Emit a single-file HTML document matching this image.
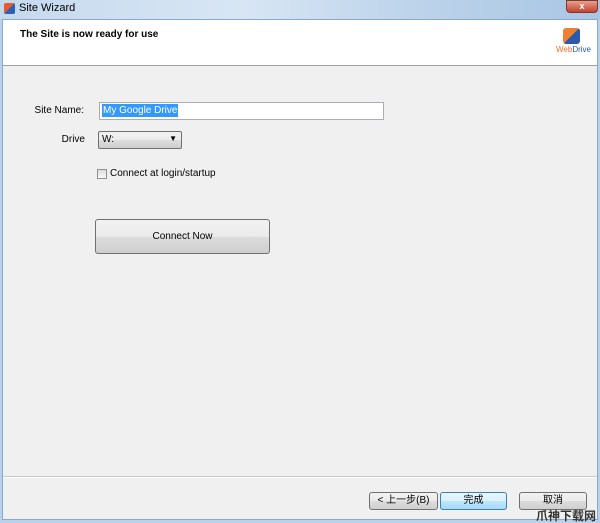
<!DOCTYPE html>
<html><head><style>
html,body{margin:0;width:600px;height:523px;overflow:hidden}
body{font-family:"Liberation Sans","Noto Sans CJK SC",sans-serif;font-size:10px;color:#000;position:relative;background:#b9d1ea}
.a{position:absolute;box-sizing:border-box;white-space:nowrap}
.btn{background:linear-gradient(#f2f2f2 0%,#ebebeb 50%,#dddddd 51%,#cfcfcf 100%);border:1px solid #707070;border-radius:3px;text-align:center}
</style></head><body>
<div class="a" style="left:0;top:0;width:600px;height:19px;background:linear-gradient(90deg,#c5d9ee,#d8e6f4 40%,#bcd3ea 70%,#a9c6e4)"></div>
<div class="a" style="left:4px;top:3px;width:11px;height:11px;background:linear-gradient(135deg,#e85a2a 50%,#2a62b8 50%);border-radius:2px"></div>
<div class="a" style="left:19px;top:2px;font-size:11px">Site Wizard</div>
<div class="a" style="left:566px;top:0;width:32px;height:13px;background:linear-gradient(#e8a090,#c4432d);border:1px solid #7a3a30;border-radius:0 0 4px 4px;color:#fff;font-weight:bold;text-align:center;font-size:9px;line-height:11px">x</div>
<div class="a" style="left:2px;top:19px;width:596px;height:501px;background:#f0f0f0;border:1px solid #8aa8c8"></div>
<div class="a" style="left:3px;top:20px;width:594px;height:46px;background:#fff;border-bottom:1px solid #a0a0a0"></div>
<div class="a" style="left:20px;top:29px;font-weight:bold;font-size:10px">The Site is now ready for use</div>
<div class="a" style="left:563px;top:28px;width:17px;height:16px;border-radius:3px;background:linear-gradient(135deg,#f08030 50%,#2a5aa8 50%)"></div>
<div class="a" style="left:556px;top:45px;font-size:8px;color:#2a5aa8"><span style="color:#e87030">Web</span>Drive</div>
<div class="a" style="left:20px;top:105px;width:64px;text-align:right">Site Name:</div>
<div class="a" style="left:99px;top:102px;width:285px;height:18px;background:#fff;border:1px solid #abadb3"></div>
<div class="a" style="left:102px;top:104px;background:#3399ff;color:#fff;padding:0 1px;line-height:13px">My Google Drive</div>
<div class="a" style="left:40px;top:134px;width:45px;text-align:right">Drive</div>
<div class="a btn" style="left:98px;top:131px;width:84px;height:18px;text-align:left;padding:2px 3px;border-radius:2px">W:<span style="position:absolute;right:4px;top:2px;font-size:8px">▼</span></div>
<div class="a" style="left:97px;top:169px;width:10px;height:10px;border:1px solid #8f8f8f;background:linear-gradient(#dcdcdc,#fafafa)"></div>
<div class="a" style="left:110px;top:168px">Connect at login/startup</div>
<div class="a btn" style="left:95px;top:219px;width:175px;height:35px;line-height:33px">Connect Now</div>
<div class="a" style="left:3px;top:476px;width:594px;height:2px;border-top:1px solid #c8c8c8;border-bottom:1px solid #fff"></div>
<div class="a btn" style="left:369px;top:492px;width:69px;height:18px;line-height:16px">&lt; 上一步(B)</div>
<div class="a btn" style="left:440px;top:492px;width:67px;height:18px;line-height:16px;border-color:#3c7fb1;background:linear-gradient(#eaf6fd,#d9f0fc 50%,#bee6fd 51%,#a7d9f5)">完成</div>
<div class="a btn" style="left:519px;top:492px;width:68px;height:18px;line-height:16px">取消</div>
<div class="a" style="left:536px;top:509px;font-size:12px;line-height:14px;color:#333;font-weight:bold">爪神下载网</div>
</body></html>
